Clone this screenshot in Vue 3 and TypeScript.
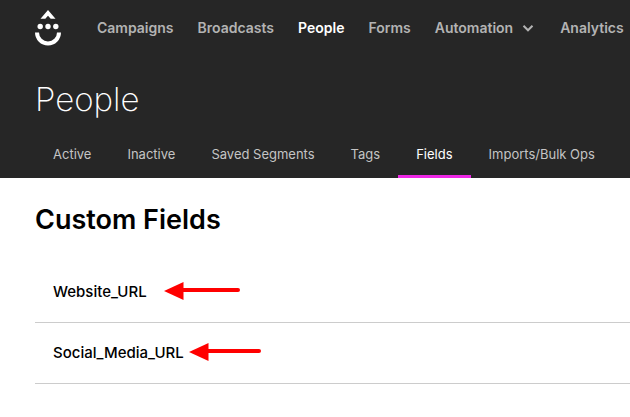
<script setup lang="ts">
interface NavItem {
  label: string
  active?: boolean
  menu?: boolean
}

interface Field {
  name: string
  shaft: number
}

const navItems: NavItem[] = [
  { label: 'Campaigns' },
  { label: 'Broadcasts' },
  { label: 'People', active: true },
  { label: 'Forms' },
  { label: 'Automation', menu: true },
  { label: 'Analytics' },
]

const tabs: NavItem[] = [
  { label: 'Active' },
  { label: 'Inactive' },
  { label: 'Saved Segments' },
  { label: 'Tags' },
  { label: 'Fields', active: true },
  { label: 'Imports/Bulk Ops' },
]

const fields: Field[] = [
  { name: 'Website_URL', shaft: 74 },
  { name: 'Social_Media_URL', shaft: 70 },
]
</script>

<template>
  <div class="page">
    <header class="header">
      <div class="topbar">
        <a class="logo" href="#" aria-label="Home">
          <svg width="26" height="36" viewBox="0 0 26 36" fill="#fff" aria-hidden="true">
            <path d="M13 0 20.5 8.7H15.7L13 5.7 10.3 8.7H5.5Z" />
            <circle cx="5.2" cy="16.5" r="2.7" />
            <circle cx="13" cy="16.5" r="2.7" />
            <circle cx="20.8" cy="16.5" r="2.7" />
            <path d="M0 22.5H4A9 9 0 0 0 22 22.5H26A13 13 0 0 1 0 22.5Z" />
          </svg>
        </a>
        <nav class="nav" aria-label="Main">
          <a
            v-for="item in navItems"
            :key="item.label"
            href="#"
            :class="['nav-link', { active: item.active }]"
          >
            {{ item.label }}
            <svg v-if="item.menu" class="chevron" width="12" height="8" viewBox="0 0 12 8" aria-hidden="true">
              <path d="M1.5 1.8 6 6.3 10.5 1.8" fill="none" stroke="currentColor" stroke-width="2" />
            </svg>
          </a>
        </nav>
      </div>
      <h1 class="title">People</h1>
      <nav class="tabs" aria-label="People">
        <a
          v-for="tab in tabs"
          :key="tab.label"
          href="#"
          :class="['tab', { active: tab.active }]"
        >{{ tab.label }}</a>
      </nav>
    </header>
    <main class="content">
      <h2 class="heading">Custom Fields</h2>
      <ul class="fields">
        <li v-for="field in fields" :key="field.name" class="field">
          <span class="field-name">{{ field.name }}</span>
          <svg class="arrow" width="76" height="20" viewBox="0 0 76 20" aria-hidden="true">
            <path d="M0 9 19.5 0V18Z" fill="#f00" />
            <path :d="`M18 8H${field.shaft}`" stroke="#f00" stroke-width="4" stroke-linecap="round" />
          </svg>
        </li>
      </ul>
    </main>
  </div>
</template>

<style>
body {
  margin: 0;
  background: #fff;
}
</style>

<style scoped>
.page {
  font-family: Inter, "Liberation Sans", sans-serif;
  color: #000;
  overflow-x: hidden;
}

.header {
  background: #262626;
}

.topbar {
  display: flex;
  align-items: center;
  gap: 36px;
  height: 56px;
  padding-left: 35px;
}

.logo {
  display: flex;
}

.nav {
  display: flex;
  gap: 24px;
}

.nav-link {
  display: flex;
  align-items: center;
  gap: 9px;
  font-size: 14px;
  line-height: 20px;
  font-weight: 600;
  color: #b3b3b3;
  text-decoration: none;
  white-space: nowrap;
}

.nav-link.active {
  color: #fff;
}

.chevron {
  margin-right: 2px;
}

.title {
  margin: 0;
  padding: 23px 35px 11px;
  font-size: 33px;
  line-height: 40px;
  font-weight: 200;
  color: #fff;
}

.tabs {
  display: flex;
  padding-left: 35px;
}

.tab {
  padding: 14px 18px 11px;
  border-bottom: 3px solid transparent;
  font-size: 13px;
  line-height: 20px;
  color: #c4c4c4;
  text-decoration: none;
  white-space: nowrap;
}

.tab.active {
  border-bottom-color: #ee28e6;
  color: #fff;
}

.content {
  padding: 26px 0 0 35px;
}

.heading {
  margin: 0;
  font-size: 27px;
  line-height: 32px;
  font-weight: 600;
}

.fields {
  margin: 26px 0 0;
  padding: 0;
  list-style: none;
}

.field {
  display: flex;
  align-items: center;
  height: 60px;
  padding-left: 18px;
  border-bottom: 1px solid #ccc;
}

.field-name {
  font-size: 15px;
  line-height: 20px;
  font-weight: 500;
}

.arrow {
  margin-left: 17px;
}

.field + .field .arrow {
  margin-left: 5px;
}
</style>
